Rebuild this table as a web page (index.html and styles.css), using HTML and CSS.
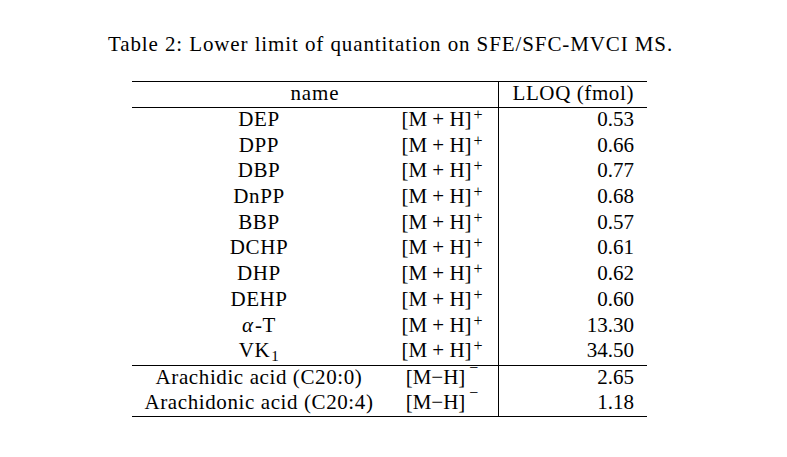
FILE: index.html
```html
<!DOCTYPE html>
<html lang="en">
<head>
<meta charset="utf-8">
<title>Table 2</title>
<link rel="stylesheet" href="styles.css">
</head>
<body>
<div class="page">
  <p class="caption">Table 2: Lower limit of quantitation on SFE/SFC-MVCI MS.</p>
  <div class="table-wrap">
    <table class="lloq">
      <colgroup>
        <col class="c-name">
        <col class="c-ion">
        <col class="c-val">
      </colgroup>
      <thead>
        <tr>
          <th class="h-name" colspan="2">name</th>
          <th class="h-val">LLOQ (fmol)</th>
        </tr>
      </thead>
      <tbody>
        <tr><td class="name">DEP</td><td class="ion">[M + H]<span class="sup">+</span></td><td class="val">0.53</td></tr>
        <tr><td class="name">DPP</td><td class="ion">[M + H]<span class="sup">+</span></td><td class="val">0.66</td></tr>
        <tr><td class="name">DBP</td><td class="ion">[M + H]<span class="sup">+</span></td><td class="val">0.77</td></tr>
        <tr><td class="name">DnPP</td><td class="ion">[M + H]<span class="sup">+</span></td><td class="val">0.68</td></tr>
        <tr><td class="name">BBP</td><td class="ion">[M + H]<span class="sup">+</span></td><td class="val">0.57</td></tr>
        <tr><td class="name">DCHP</td><td class="ion">[M + H]<span class="sup">+</span></td><td class="val">0.61</td></tr>
        <tr><td class="name">DHP</td><td class="ion">[M + H]<span class="sup">+</span></td><td class="val">0.62</td></tr>
        <tr><td class="name">DEHP</td><td class="ion">[M + H]<span class="sup">+</span></td><td class="val">0.60</td></tr>
        <tr><td class="name"><i class="greek">α</i>-T</td><td class="ion">[M + H]<span class="sup">+</span></td><td class="val">13.30</td></tr>
        <tr><td class="name">VK<span class="sub">1</span></td><td class="ion">[M + H]<span class="sup">+</span></td><td class="val">34.50</td></tr>
        <tr class="group-start"><td class="name">Arachidic acid (C20:0)</td><td class="ion">[M−H]<span class="sup minus">−</span></td><td class="val">2.65</td></tr>
        <tr class="last"><td class="name">Arachidonic acid (C20:4)</td><td class="ion">[M−H]<span class="sup minus">−</span></td><td class="val">1.18</td></tr>
      </tbody>
    </table>
  </div>
</div>
</body>
</html>
```
FILE: styles.css
```css
html, body {
  margin: 0;
  padding: 0;
  background: #ffffff;
}

body {
  font-family: "Liberation Serif", "Times New Roman", serif;
  color: #000000;
  font-size: 21px;
}

.page {
  width: 787px;
  height: 457px;
  overflow: hidden;
}

.caption {
  margin: 0;
  padding-top: 32px;
  padding-right: 6px;
  line-height: 24px;
  text-align: center;
  letter-spacing: 0.9px;
  white-space: nowrap;
}

.table-wrap {
  padding-left: 132px;
  margin-top: 25px;
}

.lloq {
  border-collapse: separate;
  border-spacing: 0;
  table-layout: fixed;
  width: 515px;
}

.c-name { width: 254px; }
.c-ion { width: 112px; }
.c-val { width: 149px; }

.lloq th,
.lloq td {
  box-sizing: border-box;
  padding: 0;
  font-weight: normal;
  line-height: 22px;
  white-space: nowrap;
}

.lloq th {
  border-top: 1px solid #000;
  border-bottom: 1px solid #000;
  padding-bottom: 3px;
}

.h-name {
  text-align: center;
  letter-spacing: 0.9px;
}

.h-val {
  text-align: right;
  padding-right: 13px !important;
  border-left: 1px solid #000;
  letter-spacing: 0.6px;
}

.lloq td {
  padding-bottom: 3.7px;
}

.name {
  text-align: center;
  letter-spacing: 0.6px;
}

.ion {
  text-align: center;
  padding-left: 0 !important;
}

.val {
  text-align: right;
  padding-right: 13px !important;
  border-left: 1px solid #000;
}

.group-start td {
  border-top: 1px solid #000;
  padding-bottom: 3px;
}

.last td {
  border-bottom: 1px solid #000;
  padding-bottom: 3px;
}

.sup {
  font-size: 16px;
  line-height: 0;
  vertical-align: 6px;
  margin-left: 2px;
}

.sup.minus {
  vertical-align: 11px;
  margin-left: 4px;
}

.sub {
  font-size: 15px;
  line-height: 0;
  vertical-align: -4px;
  margin-left: 1px;
}

.greek {
  font-style: italic;
  letter-spacing: 0;
  margin-right: 2px;
}
```
